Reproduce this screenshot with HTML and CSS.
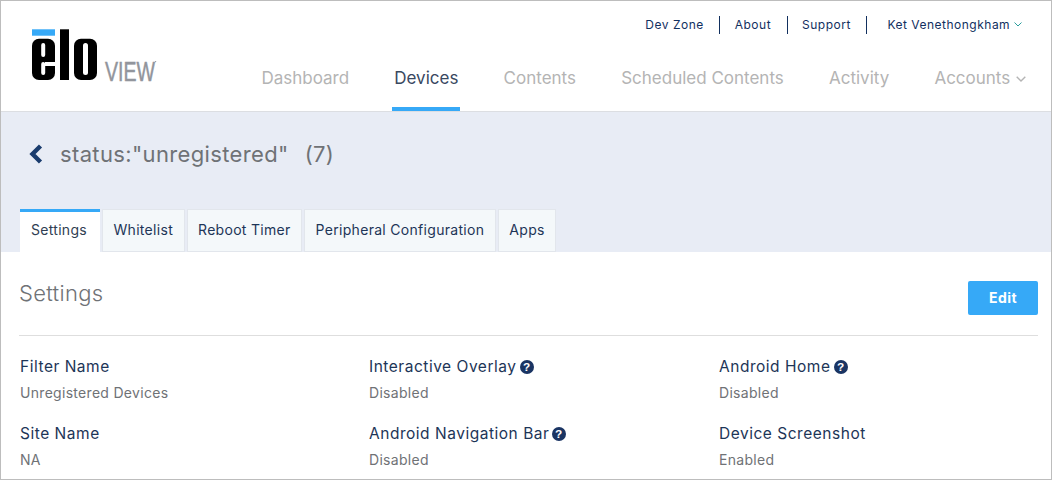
FILE: index.html
```html
<!DOCTYPE html>
<html lang="en">
<head>
<meta charset="utf-8">
<title>Elo View</title>
<link rel="stylesheet" href="styles.css">
</head>
<body>
<div class="frame">
  <header class="header">
    <svg class="logo" width="148" height="54" viewBox="0 0 148 54" aria-label="elo VIEW">
      <rect x="0" y="0.3" width="23" height="6.4" fill="#36a9f7"/>
      <rect x="0" y="9.7" width="23" height="41.3" rx="7" fill="#000"/>
      <rect x="9.2" y="14" width="4" height="14" rx="2" fill="#fff"/>
      <rect x="9.2" y="33" width="4" height="13" rx="2" fill="#fff"/>
      <rect x="13" y="33" width="11" height="4" fill="#fff"/>
      <rect x="28" y="0.3" width="9" height="50.7" fill="#000"/>
      <rect x="42" y="9.7" width="23" height="41.3" rx="7" fill="#000"/>
      <rect x="51" y="14" width="5" height="32" rx="2.5" fill="#fff"/>
      <text class="logo-view" x="73" y="52" textLength="50" lengthAdjust="spacingAndGlyphs">VIEW</text>
      <circle cx="123.6" cy="32.6" r="0.7" fill="#92959c"/>
    </svg>
    <div class="header-right">
      <nav class="topnav">
        <a class="top-link">Dev Zone</a>
        <a class="top-link">About</a>
        <a class="top-link">Support</a>
        <a class="top-link user">Ket Venethongkham
          <svg class="chev-small" width="8" height="5" viewBox="0 0 8 5"><polyline points="0.5,0.5 4,4 7.5,0.5" fill="none" stroke="#2a9d9d" stroke-width="1"/></svg>
        </a>
      </nav>
      <nav class="mainnav">
        <a class="main-link">Dashboard</a>
        <a class="main-link active">Devices</a>
        <a class="main-link">Contents</a>
        <a class="main-link">Scheduled Contents</a>
        <a class="main-link">Activity</a>
        <a class="main-link">Accounts
          <svg class="chev" width="10" height="6" viewBox="0 0 10 6"><polyline points="0.7,0.7 5,5 9.3,0.7" fill="none" stroke="#b4b4b4" stroke-width="1.4"/></svg>
        </a>
      </nav>
    </div>
  </header>
  <section class="band">
    <div class="title-row">
      <svg class="back" width="14" height="20" viewBox="0 0 14 20"><polyline points="11.5,2 3.5,10 11.5,18" fill="none" stroke="#1a3c6e" stroke-width="4.4"/></svg>
      <h1 class="title">status:"unregistered"</h1>
      <span class="count">(7)</span>
    </div>
    <div class="tabs">
      <a class="tab active">Settings</a>
      <a class="tab">Whitelist</a>
      <a class="tab">Reboot Timer</a>
      <a class="tab">Peripheral Configuration</a>
      <a class="tab">Apps</a>
    </div>
  </section>
  <main class="content">
    <div class="content-head">
      <h2 class="section-title">Settings</h2>
      <button class="edit">Edit</button>
    </div>
    <div class="grid">
      <div class="field"><div class="label">Filter Name</div><div class="value">Unregistered Devices</div></div>
      <div class="field"><div class="label">Interactive Overlay<svg class="help" width="14" height="14" viewBox="0 0 13 13"><circle cx="6.5" cy="6.5" r="6.5" fill="#1a3463"/><text class="help-q" x="6.5" y="10.4" text-anchor="middle">?</text></svg></div><div class="value">Disabled</div></div>
      <div class="field"><div class="label">Android Home<svg class="help" width="14" height="14" viewBox="0 0 13 13"><circle cx="6.5" cy="6.5" r="6.5" fill="#1a3463"/><text class="help-q" x="6.5" y="10.4" text-anchor="middle">?</text></svg></div><div class="value">Disabled</div></div>
      <div class="field"><div class="label">Site Name</div><div class="value">NA</div></div>
      <div class="field"><div class="label">Android Navigation Bar<svg class="help" width="14" height="14" viewBox="0 0 13 13"><circle cx="6.5" cy="6.5" r="6.5" fill="#1a3463"/><text class="help-q" x="6.5" y="10.4" text-anchor="middle">?</text></svg></div><div class="value">Disabled</div></div>
      <div class="field"><div class="label">Device Screenshot</div><div class="value">Enabled</div></div>
    </div>
  </main>
</div>
</body>
</html>
```
FILE: styles.css
```css
* { box-sizing: border-box; }
html, body { margin: 0; padding: 0; height: 100%; overflow: hidden; }
body { font-family: Inter, "Liberation Sans", sans-serif; background: #fff; }
.frame { width: 1052px; height: 480px; border: 1px solid #bdbdbd; overflow: hidden; display: flex; flex-direction: column; background: #fff; }

.header { height: 111px; flex: none; display: flex; background: #fff; border-bottom: 1px solid #dcdee2; position: relative; }
.logo { flex: none; margin: 28px 0 0 31px; overflow: visible; }
.logo-view { font-family: "Liberation Sans", sans-serif; font-size: 28px; fill: #92959c; stroke: #92959c; stroke-width: 0.5px; }
.header-right { flex: 1; display: flex; flex-direction: column; align-items: flex-end; }

.topnav { display: flex; margin-top: 15px; height: 18px; align-items: stretch; padding-right: 29px; }
.top-link { font-size: 12px; line-height: 17px; letter-spacing: 0.5px; color: #12305f; padding: 0 15.5px 0 14.5px; border-right: 1px solid #12305f; white-space: nowrap; }
.top-link.user { border-right: 0; padding: 0 0 0 20px; }
.chev-small { vertical-align: 2px; }

.mainnav { display: flex; gap: 41.2px; margin-top: 32px; padding-right: 23px; }
.main-link { font-size: 17px; line-height: 24px; color: #b4b4b4; padding: 0 2px 17px; border-bottom: 4px solid transparent; white-space: nowrap; }
.main-link.active { color: #39485f; border-bottom-color: #36a9f7; }
.chev { margin-left: 1px; vertical-align: 2px; }

.band { height: 140px; flex: none; background: #e8ecf5; display: flex; flex-direction: column; justify-content: space-between; padding-left: 19px; }
.title-row { display: flex; align-items: center; margin-top: 29px; padding-left: 9px; }
.back { flex: none; }
.title { font-size: 22px; font-weight: 400; line-height: 26px; letter-spacing: 0.36px; margin: 0 0 0 17px; color: #6f7276; }
.count { font-size: 22px; line-height: 26px; letter-spacing: 0.33px; color: #6f7276; margin-left: 16px; }

.tabs { display: flex; gap: 2px; }
.tab { font-size: 14px; line-height: 20px; letter-spacing: 0.3px; color: #1d3557; background: #f4f8fa; padding: 10px 10.5px 11px; height: 43px; border: 1px solid #e2e6ec; white-space: nowrap; }
.tab.active { background: #fff; border: 0; border-top: 3px solid #36a9f7; width: 80px; padding: 8px 11px 12px; color: #2f3e52; }

.content { flex: 1; padding: 0 13px 0 18px; background: #fff; }
.content-head { display: flex; justify-content: space-between; align-items: flex-start; height: 84px; border-bottom: 1px solid #dedede; }
.section-title { font-size: 22px; font-weight: 300; line-height: 27px; letter-spacing: 0.3px; color: #6f7276; margin: 28px 0 0; }
.edit { width: 70px; height: 34px; margin-top: 29px; padding: 0 0 2px; border: 0; border-radius: 2px; background: #36a9f7; color: #fff; font: 700 14px Inter, sans-serif; letter-spacing: 0.5px; }

.grid { display: grid; grid-template-columns: 349px 350px 350px; margin: 21px 0 0 1px; row-gap: 22px; }
.label { font-size: 15.5px; line-height: 20px; letter-spacing: 0.52px; color: #1d3557; white-space: nowrap; }
.value { font-size: 14px; line-height: 18px; letter-spacing: 0.3px; color: #6f7276; margin-top: 7px; }
.help { vertical-align: -2px; margin-left: 3px; }
.help-q { font: 700 11px "Liberation Sans", sans-serif; fill: #fff; }
```
